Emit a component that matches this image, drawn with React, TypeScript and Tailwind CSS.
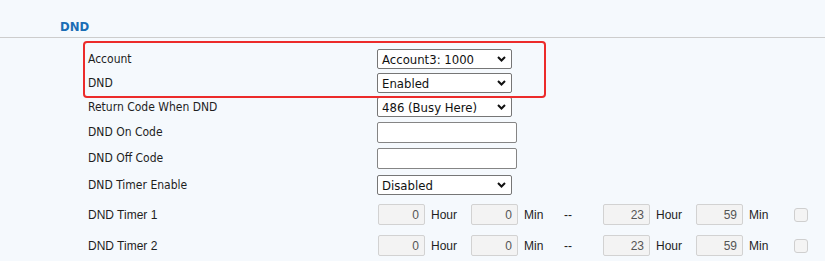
import { ReactNode } from 'react';

const label = "font-['DejaVu_Sans_Condensed','DejaVu_Sans',sans-serif] text-[12px] text-[#1e1e1e]";
const arial = "font-['Liberation_Sans',Arial,sans-serif] text-[12px] text-[#1e1e1e]";

function Chevron() {
  return (
    <svg className="absolute right-[5px] top-1/2 -translate-y-1/2 w-[9px] h-[6px]" viewBox="0 0 9 6">
      <path d="M1 1l3.5 3.5L8 1" fill="none" stroke="#111" strokeWidth={2} />
    </svg>
  );
}

function Select({ value }: { value: string }) {
  return (
    <div className="relative w-[135px] h-[20px] bg-white border border-[#767676] rounded-[2px] flex items-center pl-[4px]">
      <span className="font-['DejaVu_Sans_Condensed','DejaVu_Sans',sans-serif] text-[13px] text-[#111] leading-none">{value}</span>
      <Chevron />
    </div>
  );
}

function TextBox() {
  return <input className="w-[140px] h-[21px] bg-white border border-[#858585] rounded-[2px] outline-none" />;
}

function Row({ name, h, children }: { name: string; h: string; children: ReactNode }) {
  return (
    <div className={`flex items-center ${h}`}>
      <div className={`w-[289px] ${label}`}>{name}</div>
      {children}
    </div>
  );
}

function TimeBox({ value, unit }: { value: string; unit: string }) {
  return (
    <div className="flex items-center w-[93px] shrink-0">
      <div className={`w-[47px] h-[21px] border border-[#d2d2d2] bg-[#f3f3f3] rounded-[2px] flex items-center justify-end pr-[5px] ${arial} text-[#555]`}>
        {value}
      </div>
      <span className={`ml-[6px] ${arial}`}>{unit}</span>
    </div>
  );
}

function TimerRow({ name }: { name: string }) {
  return (
    <div className="flex items-center h-[31px]">
      <div className={`w-[290px] ${arial}`}>{name}</div>
      <TimeBox value="0" unit="Hour" />
      <TimeBox value="0" unit="Min" />
      <span className={`w-[39px] ${arial}`}>--</span>
      <TimeBox value="23" unit="Hour" />
      <TimeBox value="59" unit="Min" />
      <div className="w-[14px] h-[14px] border border-[#cfcfcf] bg-[#f4f4f4] rounded-[3px] ml-[5px]" />
    </div>
  );
}

export default function App() {
  return (
    <div className="w-[825px] h-[261px] bg-[#f5f9fd] overflow-hidden relative">
      <div className="h-[38px] border-b border-[#cdcdcd] flex items-end pl-[60px] pb-[4px]">
        <span className="font-['DejaVu_Sans_Condensed','DejaVu_Sans',sans-serif] font-bold text-[13px] leading-none text-[#1a6db5]">DND</span>
      </div>

      <div className="pl-[88px] pt-[9px]">
        <Row name="Account" h="h-[24px]"><Select value="Account3: 1000" /></Row>
        <Row name="DND" h="h-[24px]"><Select value="Enabled" /></Row>
        <Row name="Return Code When DND" h="h-[24px]"><Select value="486 (Busy Here)" /></Row>
        <Row name="DND On Code" h="h-[26px]"><TextBox /></Row>
        <Row name="DND Off Code" h="h-[26px]"><TextBox /></Row>
        <Row name="DND Timer Enable" h="h-[28px]"><Select value="Disabled" /></Row>
        <TimerRow name="DND Timer 1" />
        <TimerRow name="DND Timer 2" />
      </div>

      {/* highlight box */}
      <div className="absolute left-[83px] top-[41px] w-[463px] h-[57px] border-[2.5px] border-[#ec2b2b] rounded-[4px] pointer-events-none" />
    </div>
  );
}
